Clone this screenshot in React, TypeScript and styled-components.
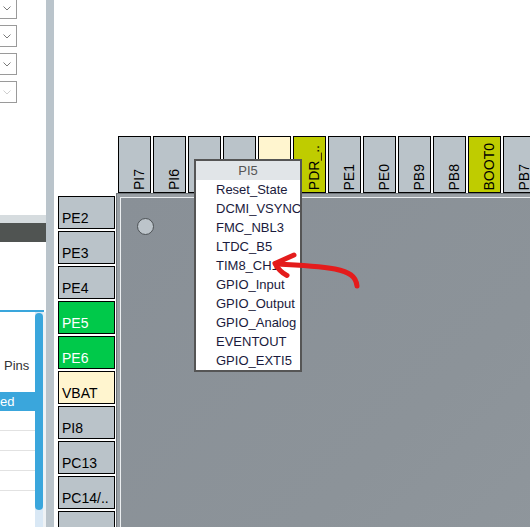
import * as React from "react";
import styled, { createGlobalStyle, css } from "styled-components";

type PinKind = "io" | "power" | "special" | "used";

const colors = {
  io: "#bac3c9",
  power: "#fff5cf",
  special: "#bfcc00",
  used: "#00c94a",
  divider: "#bac4cb",
  blue: "#3aa6dc",
};

const GlobalStyle = createGlobalStyle`
  html, body {
    margin: 0;
    padding: 0;
    overflow: hidden;
    background: #fff;
    font-family: "Liberation Sans", Arial, sans-serif;
  }
`;

const Page = styled.div`
  position: relative;
  display: flex;
  width: 530px;
  height: 527px;
  overflow: hidden;
`;

const LeftPanel = styled.div`
  width: 46px;
  flex-shrink: 0;
  display: flex;
  flex-direction: column;
  overflow: hidden;
  background: #fff;
`;

const SelectStack = styled.div`
  display: flex;
  flex-direction: column;
  gap: 6px;
  margin-top: -3px;
`;

const SelectBox = styled.div`
  box-sizing: border-box;
  width: 27px;
  height: 22px;
  margin-left: -10px;
  border: 1px solid #9a9a9a;
  display: flex;
  align-items: center;
  padding-left: 12px;
  background: #fff;
`;

const PanelStrip = styled.div`
  margin-top: 112px;
  height: 8px;
  background: #d6dcdf;
`;

const PanelHeader = styled.div`
  height: 19px;
  background: #505452;
`;

const BlueRule = styled.div`
  margin-top: 68px;
  width: 44px;
  height: 2px;
  background: ${colors.blue};
`;

const ListArea = styled.div`
  flex: 1;
  display: grid;
  grid-template-columns: 35px 8px 3px;
`;

const ListBody = styled.div`
  display: flex;
  flex-direction: column;
  font-size: 13px;
  color: #333;
`;

const PinsLabel = styled.div`
  margin-top: 45px;
  padding-left: 4px;
  line-height: 18px;
`;

const ListRow = styled.div<{ $selected?: boolean }>`
  height: 20px;
  line-height: 19px;
  box-sizing: border-box;
  border-bottom: 1px solid #e2e2e2;
  ${(p) =>
    p.$selected &&
    css`
      margin-top: 17px;
      height: 19px;
      border-bottom: none;
      background: ${colors.blue};
      color: #fff;
    `}
`;

const ScrollTrack = styled.div`
  display: flex;
  flex-direction: column;
  background: #d9e8f5;
`;

const ScrollThumb = styled.div`
  margin-top: 1px;
  height: 197px;
  border-radius: 4px;
  background: ${colors.blue};
`;

const ScrollGutter = styled.div`
  background: #eef2f5;
`;

const Divider = styled.div`
  width: 8px;
  flex-shrink: 0;
  background: ${colors.divider};
`;

const MainArea = styled.div`
  flex: 1;
  background: #fff;
  padding: 136px 0 0 4px;
  overflow: hidden;
`;

const Board = styled.div`
  display: grid;
  grid-template-columns: 58px 440px;
  grid-template-rows: 57px 420px;
`;

const TopPins = styled.div`
  grid-column: 2;
  grid-row: 1;
  display: flex;
  gap: 2px;
  padding-left: 2px;
`;

const LeftPins = styled.div`
  grid-column: 1;
  grid-row: 2;
  display: flex;
  flex-direction: column;
  gap: 2px;
  padding-top: 3px;
`;

const Pin = styled.div<{ $kind: PinKind; $side: "top" | "left" }>`
  box-sizing: border-box;
  flex-shrink: 0;
  border: 1px solid #000;
  background: ${(p) => colors[p.$kind]};
  color: ${(p) => (p.$kind === "used" ? "#fff" : "#000")};
  font-size: 14px;
  line-height: 16px;
  display: flex;
  white-space: nowrap;
  overflow: hidden;
  ${(p) =>
    p.$side === "top"
      ? css`
          width: 33px;
          height: 57px;
          align-items: flex-end;
          justify-content: flex-end;
          padding: 0 3px 2px 0;
        `
      : css`
          width: 57px;
          height: 33px;
          align-items: flex-end;
          padding: 0 0 2px 3px;
        `}
`;

const VerticalLabel = styled.span`
  writing-mode: vertical-rl;
  transform: rotate(180deg);
`;

const Chip = styled.div`
  grid-column: 2;
  grid-row: 2;
  border-top: 1px solid #6e7479;
  border-left: 1px solid #6e7479;
  background: #9aa0a5;
  padding: 3px 0 0 3px;
  display: flex;
`;

const ChipFace = styled.div`
  flex: 1;
  border-top: 1px solid #eceff1;
  border-left: 1px solid #eceff1;
  background: linear-gradient(135deg, #899097 0%, #8c9399 60%, #90979d 100%);
`;

const PinMarker = styled.div`
  box-sizing: border-box;
  width: 17px;
  height: 17px;
  margin: 20px 0 0 16px;
  border-radius: 50%;
  border: 1px solid #4d5256;
  background: #bcc4ca;
`;

const PopupMenu = styled.div`
  position: absolute;
  left: 194px;
  top: 159px;
  width: 108px;
  box-sizing: border-box;
  border: 2px solid #555;
  background: #fff;
  font-size: 13px;
  white-space: nowrap;
  overflow: hidden;
`;

const PopupHeader = styled.div`
  background: #e1e5e8;
  color: #555;
  text-align: center;
  line-height: 19px;
`;

const PopupItem = styled.div`
  padding-left: 20px;
  line-height: 19px;
  color: #1a1a3c;
`;

const ArrowLayer = styled.svg`
  position: absolute;
  left: 0;
  top: 0;
  pointer-events: none;
`;

const Chevron = ({ muted }: { muted?: boolean }) => (
  <svg width="8" height="5" viewBox="0 0 8 5">
    <path
      d="M0.5 0.5 L4 4 L7.5 0.5"
      fill="none"
      stroke={muted ? "#cfcfcf" : "#7a7a7a"}
      strokeWidth="1"
    />
  </svg>
);

const topPins: { name: string; kind: PinKind }[] = [
  { name: "PI7", kind: "io" },
  { name: "PI6", kind: "io" },
  { name: "PI5", kind: "io" },
  { name: "PI4", kind: "io" },
  { name: "VDD", kind: "power" },
  { name: "PDR_..", kind: "special" },
  { name: "PE1", kind: "io" },
  { name: "PE0", kind: "io" },
  { name: "PB9", kind: "io" },
  { name: "PB8", kind: "io" },
  { name: "BOOT0", kind: "special" },
  { name: "PB7", kind: "io" },
];

const leftPins: { name: string; kind: PinKind }[] = [
  { name: "PE2", kind: "io" },
  { name: "PE3", kind: "io" },
  { name: "PE4", kind: "io" },
  { name: "PE5", kind: "used" },
  { name: "PE6", kind: "used" },
  { name: "VBAT", kind: "power" },
  { name: "PI8", kind: "io" },
  { name: "PC13", kind: "io" },
  { name: "PC14/..", kind: "io" },
  { name: "PC15/..", kind: "io" },
];

const signals = [
  "Reset_State",
  "DCMI_VSYNC",
  "FMC_NBL3",
  "LTDC_B5",
  "TIM8_CH1",
  "GPIO_Input",
  "GPIO_Output",
  "GPIO_Analog",
  "EVENTOUT",
  "GPIO_EXTI5",
];

export default function App() {
  return (
    <>
      <GlobalStyle />
      <Page>
        <LeftPanel>
          <SelectStack>
            <SelectBox>
              <Chevron />
            </SelectBox>
            <SelectBox>
              <Chevron />
            </SelectBox>
            <SelectBox>
              <Chevron />
            </SelectBox>
            <SelectBox>
              <Chevron muted />
            </SelectBox>
          </SelectStack>
          <PanelStrip />
          <PanelHeader />
          <BlueRule />
          <ListArea>
            <ListBody>
              <PinsLabel>Pins</PinsLabel>
              <ListRow $selected>ed</ListRow>
              <ListRow />
              <ListRow />
              <ListRow />
              <ListRow />
            </ListBody>
            <ScrollTrack>
              <ScrollThumb />
            </ScrollTrack>
            <ScrollGutter />
          </ListArea>
        </LeftPanel>
        <Divider />
        <MainArea>
          <Board>
            <TopPins>
              {topPins.map((p) => (
                <Pin key={p.name} $kind={p.kind} $side="top">
                  <VerticalLabel>{p.name}</VerticalLabel>
                </Pin>
              ))}
            </TopPins>
            <LeftPins>
              {leftPins.map((p) => (
                <Pin key={p.name} $kind={p.kind} $side="left">
                  {p.name}
                </Pin>
              ))}
            </LeftPins>
            <Chip>
              <ChipFace>
                <PinMarker />
              </ChipFace>
            </Chip>
          </Board>
        </MainArea>

        {/* context menu for PI5 */}
        <PopupMenu>
          <PopupHeader>PI5</PopupHeader>
          {signals.map((s) => (
            <PopupItem key={s}>{s}</PopupItem>
          ))}
        </PopupMenu>

        {/* hand drawn annotation */}
        <ArrowLayer width="530" height="527" viewBox="0 0 530 527">
          <g
            fill="none"
            stroke="#e41c1c"
            strokeWidth="5"
            strokeLinecap="round"
            strokeLinejoin="round"
          >
            <path d="M357 286 C356 276 349 272 335 269 C318 266 298 265 276 264" />
            <path d="M294 255 L275 263.5 C278 269 282 273 287 275.5" />
          </g>
        </ArrowLayer>
      </Page>
    </>
  );
}
